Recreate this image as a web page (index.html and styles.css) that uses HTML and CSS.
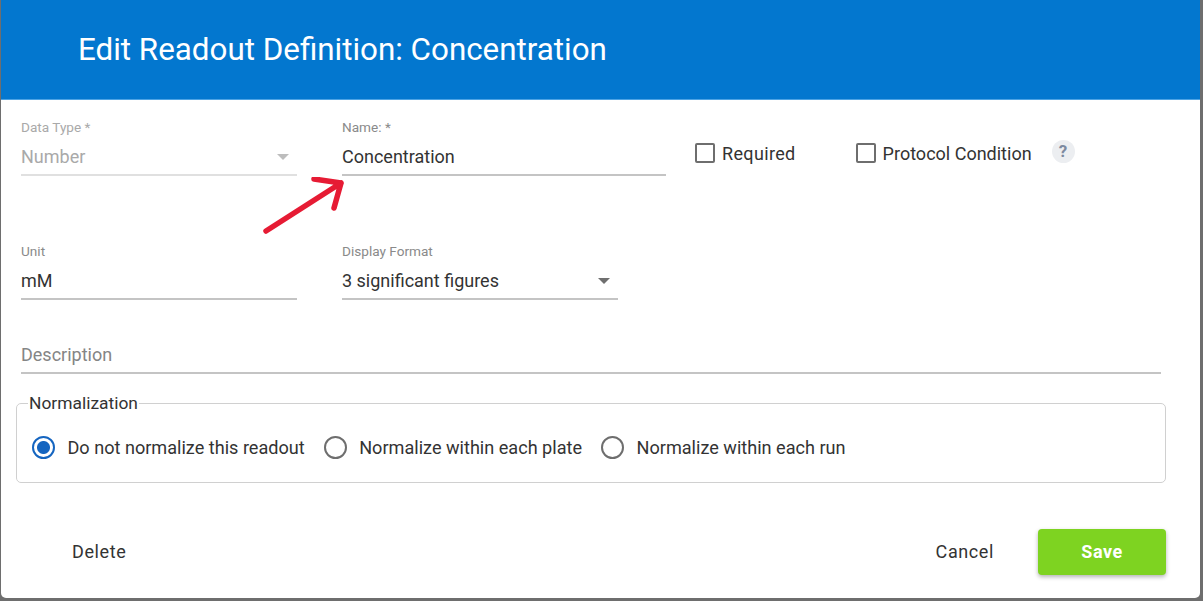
FILE: index.html
```html
<!DOCTYPE html>
<html lang="en">
<head>
  <meta charset="UTF-8">
  <meta name="viewport" content="width=device-width, initial-scale=1.0">
  <title>Edit Readout Definition</title>
  <link rel="stylesheet" href="styles.css">
</head>
<body>

<div class="dialog">
  <div class="dialog-header">
    <h1>Edit Readout Definition: Concentration</h1>
  </div>

  <div class="dialog-body">
    <div class="row row-first">
      <div class="field field-type disabled">
        <label>Data Type *</label>
        <div class="value">Number<span class="caret"></span></div>
      </div>
      <div class="field field-name">
        <label>Name: *</label>
        <div class="value">Concentration</div>
      </div>
      <div class="check check-required"><span class="box"></span>Required</div>
      <div class="check"><span class="box"></span>Protocol Condition</div>
      <span class="help">?</span>
    </div>

    <div class="row row-second">
      <div class="field field-type">
        <label>Unit</label>
        <div class="value">mM</div>
      </div>
      <div class="field field-format">
        <label>Display Format</label>
        <div class="value">3 significant figures<span class="caret"></span></div>
      </div>
    </div>

    <div class="description">Description</div>

    <fieldset class="normalization">
      <legend>Normalization</legend>
      <div class="radio"><span class="circle selected"></span>Do not normalize this readout</div>
      <div class="radio"><span class="circle"></span>Normalize within each plate</div>
      <div class="radio"><span class="circle"></span>Normalize within each run</div>
    </fieldset>
  </div>

  <div class="dialog-footer">
    <button class="btn-text btn-delete">Delete</button>
    <button class="btn-text btn-cancel">Cancel</button>
    <button class="btn-save">Save</button>
  </div>

  <!-- annotation arrow -->
  <svg class="arrow" width="90" height="64" viewBox="0 0 90 64">
    <path d="M6 54 L81 6 M54 2 L81 6 L74 31" fill="none" stroke="#e61b34" stroke-width="5.5" stroke-linecap="round" stroke-linejoin="round"/>
  </svg>
</div>

</body>
</html>
```

FILE: styles.css
```css
* {
  box-sizing: border-box;
}
html, body {
  height: 100%;
}
body {
  margin: 0;
  padding: 0 3px 3px 1px;
  background-color: #6e6e6e;
  font-family: Roboto, "Liberation Sans", Arial, sans-serif;
  color: #333;
  overflow: hidden;
}
.dialog {
  position: relative;
  display: flex;
  flex-direction: column;
  height: 598px;
  background: white;
  border-radius: 0 0 5px 5px;
}
.dialog-header {
  height: 100px;
  padding: 30px 0 0 77px;
  background-color: #0377cf;
  border-bottom: 1px solid #4da3e4;
}
.dialog-header h1 {
  margin: 0;
  color: white;
  font-size: 31.35px;
  font-weight: 400;
  line-height: 40px;
}
.dialog-body {
  flex: 1;
  padding: 0 34px 0 15px;
}
.row {
  display: flex;
  align-items: flex-start;
}
.row-first {
  padding: 19px 0 0 5px;
}
.row-second {
  padding: 67px 0 0 5px;
}
.field {
  margin-right: 45px;
}
.field label {
  display: block;
  font-size: 13.6px;
  line-height: 16px;
  color: #8a8a8a;
}
.field .value {
  position: relative;
  height: 41px;
  padding-top: 10px;
  font-size: 18px;
  line-height: 24px;
  border-bottom: 2px solid #c4c4c4;
}
.field-type {
  width: 276px;
}
.field-name {
  width: 324px;
  margin-right: 29px;
}
.field-format {
  width: 276px;
}
.disabled label, .disabled .value {
  color: #a9a9a9;
}
.disabled .value {
  border-bottom-color: #e0e0e0;
}
.caret {
  position: absolute;
  right: 8px;
  top: 19px;
  border-left: 6px solid transparent;
  border-right: 6px solid transparent;
  border-top: 6px solid #6f6f6f;
}
.disabled .caret {
  border-top-color: #bdbdbd;
}
.check {
  display: flex;
  align-items: center;
  height: 24px;
  margin-top: 22px;
  font-size: 18px;
}
.check-required {
  margin-right: 60px;
  letter-spacing: 0.35px;
}
.box {
  width: 20px;
  height: 20px;
  margin-right: 7px;
  border: 2px solid #6e6e6e;
  border-radius: 2px;
}
.help {
  width: 23px;
  height: 23px;
  margin: 21px 0 0 20px;
  border-radius: 50%;
  background-color: #eceef1;
  color: #7d8aa0;
  font-size: 17px;
  font-weight: 700;
  line-height: 22px;
  text-align: center;
}
.description {
  height: 38px;
  margin: 36px 5px 0 5px;
  padding-top: 7px;
  font-size: 18px;
  line-height: 24px;
  color: #858585;
  border-bottom: 2px solid #c4c4c4;
}
.normalization {
  display: flex;
  align-items: center;
  gap: 19px;
  height: 90px;
  margin: 19px 0 0 0;
  padding: 0 0 1px 15px;
  border: 1px solid #d0d0d0;
  border-radius: 5px;
}
.normalization legend {
  margin-left: -4px;
  padding: 0 1px;
  font-size: 17.4px;
  line-height: 20px;
}
.radio {
  display: flex;
  align-items: center;
  font-size: 18.1px;
}
.circle {
  width: 23px;
  height: 23px;
  margin-right: 12.5px;
  border: 2px solid #6e6e6e;
  border-radius: 50%;
  background: white;
}
.circle.selected {
  border-color: #1565c0;
  background: radial-gradient(circle, #1565c0 0 6px, white 7px);
}
.dialog-footer {
  display: flex;
  align-items: flex-start;
  height: 69px;
  padding-right: 34px;
}
.btn-text {
  padding: 0;
  border: none;
  background: none;
  font-family: inherit;
  font-size: 18px;
  letter-spacing: 0.6px;
  line-height: 45px;
  color: #333;
}
.btn-delete {
  margin-left: 71px;
}
.btn-cancel {
  margin-left: auto;
  margin-right: 44px;
}
.btn-save {
  width: 128px;
  height: 46px;
  padding-bottom: 3px;
  border: none;
  border-radius: 4px;
  background-color: #7ed321;
  box-shadow: 0 2px 4px rgba(0,0,0,0.3);
  color: white;
  font-family: inherit;
  font-size: 18px;
  font-weight: 700;
  letter-spacing: 0.5px;
}
.arrow {
  position: absolute;
  left: 259px;
  top: 177px;
}
```
